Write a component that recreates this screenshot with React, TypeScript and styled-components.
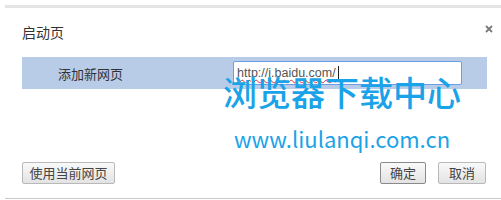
import React from 'react';
import styled, { createGlobalStyle } from 'styled-components';

const GlobalStyle = createGlobalStyle`
  html, body {
    margin: 0;
    padding: 0;
    background: #ffffff;
  }
  body {
    font-family: "Noto Sans CJK SC", "Noto Sans", sans-serif;
    color: #333;
  }
`;

const Page = styled.div`
  width: 501px;
  height: 200px;
  padding-top: 5px;
  padding-left: 5px;
  box-sizing: border-box;
  overflow: hidden;
`;

const Dialog = styled.div`
  position: relative;
  width: 496px;
  height: 194px;
  box-sizing: border-box;
  background: #fff;
  border-top: 3px solid #e4e4e4;
  border-bottom: 1px solid #c9c9c9;
  display: flex;
  flex-direction: column;
`;

const Header = styled.div`
  display: flex;
  justify-content: space-between;
  align-items: flex-start;
  padding: 14px 8px 0 17px;
  height: 20px;
`;

const Title = styled.div`
  font-size: 14px;
  line-height: 20px;
  color: #333;
`;

const Close = styled.div`
  margin-top: 3px;
  width: 8px;
  height: 8px;
  display: flex;
`;

const Band = styled.div`
  margin: 15px 0 0 17px;
  width: 465px;
  height: 32px;
  background: #b8cce8;
  display: grid;
  grid-template-columns: 211px 229px;
  align-items: center;
`;

const Label = styled.div`
  padding-left: 36px;
  font-size: 13px;
  color: #333;
`;

const Field = styled.div`
  height: 24px;
  box-sizing: border-box;
  border: 1px solid #6b9ee6;
  border-radius: 2px;
  background: #fff;
  display: flex;
  align-items: center;
  padding-left: 3px;
  font-family: "Liberation Sans", Arial, sans-serif;
  font-size: 12.5px;
  color: #555;
`;

const Url = styled.span`
  text-decoration: underline wavy #e03030;
  text-decoration-thickness: 1px;
  text-underline-offset: 2px;
`;

const Caret = styled.span`
  width: 1px;
  height: 15px;
  background: #222;
  margin-left: 2px;
`;

const Footer = styled.div`
  margin-top: auto;
  display: flex;
  justify-content: space-between;
  padding: 0 15px 14px 17px;
`;

const ButtonGroup = styled.div`
  display: flex;
  gap: 12px;
`;

const Button = styled.button<{ $primary?: boolean; $w: number }>`
  width: ${p => p.$w}px;
  height: 22px;
  padding: 0;
  box-sizing: border-box;
  border: 1px solid ${p => (p.$primary ? '#8a8a8a' : '#b9b9b9')};
  border-radius: 2px;
  background: linear-gradient(#f9f9f9, #e3e3e3);
  font-family: "Noto Sans CJK SC", sans-serif;
  font-size: 13px;
  color: #444;
  line-height: 20px;
`;

const Watermark = styled.div`
  position: absolute;
  left: 218px;
  top: 62px;
  display: flex;
  flex-direction: column;
  align-items: center;
  color: #1aa3e8;
  pointer-events: none;
`;

const MarkTitle = styled.div`
  font-size: 34px;
  font-weight: 500;
  line-height: 44px;
`;

const MarkUrl = styled.div`
  font-size: 22px;
  line-height: 30px;
  margin-top: 9px;
`;

const App = () => {
  return (
    <Page>
      <GlobalStyle />
      <Dialog>
        <Header>
          <Title>启动页</Title>
          <Close>
            <svg width="8" height="8" viewBox="0 0 8 8">
              <path d="M1 1L7 7M7 1L1 7" stroke="#7a7a7a" strokeWidth="1.8" />
            </svg>
          </Close>
        </Header>
        <Band>
          <Label>添加新网页</Label>
          <Field>
            <Url>http://i.baidu.com/</Url>
            <Caret />
          </Field>
        </Band>
        <Footer>
          <Button $w={93}>使用当前网页</Button>
          <ButtonGroup>
            <Button $w={46} $primary>确定</Button>
            <Button $w={48}>取消</Button>
          </ButtonGroup>
        </Footer>
        <Watermark>
          <MarkTitle>浏览器下载中心</MarkTitle>
          <MarkUrl>www.liulanqi.com.cn</MarkUrl>
        </Watermark>
      </Dialog>
    </Page>
  );
};

export default App;
